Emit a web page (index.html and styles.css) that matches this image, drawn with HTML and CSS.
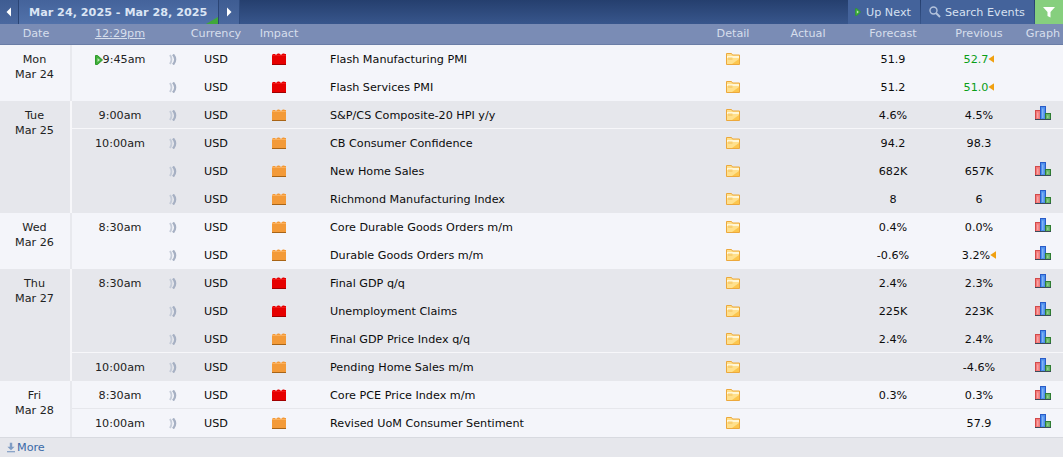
FILE: index.html
```html
<!DOCTYPE html>
<html lang="en">
<head>
<meta charset="utf-8">
<title>Calendar</title>
<link rel="stylesheet" href="styles.css">
</head>
<body>
<svg class="defs" width="0" height="0" aria-hidden="true">
  <symbol id="prev" viewBox="0 0 6 10"><path d="M5 0.5V9.5L0.5 5Z" fill="#fff"/></symbol>
  <symbol id="next" viewBox="0 0 6 10"><path d="M1 0.5V9.5L5.5 5Z" fill="#fff"/></symbol>
  <symbol id="play" viewBox="0 0 8 10"><path d="M0.5 0.5H2.5L7.5 5L2.5 9.5H0.5Z" fill="#3fae3a" stroke="#2e9a2c"/><path d="M2.5 3V7L5 5Z" fill="#bfe8b5"/></symbol>
  <symbol id="sound" viewBox="0 0 8 11">
    <path d="M1 1C2.8 3.5 2.8 7.5 1 10" fill="none" stroke="#c4cbd8" stroke-width="2"/>
    <path d="M4 0.5C6.8 3.5 6.8 7.5 4 10.5" fill="none" stroke="#a6b0c3" stroke-width="2.4"/>
  </symbol>
  <symbol id="high" viewBox="0 0 14 12">
    <path d="M0 1.5H1V1H3V1.5H5V1L6 0.5H7L8 1V1.5H10V1L11 0.5H12L13 1H14V12H0Z" fill="#e60000"/>
    <path d="M0 11H14V12H0Z" fill="#a00000"/>
    <path d="M0 2H14V3H0Z" fill="#f01818"/>
  </symbol>
  <symbol id="medium" viewBox="0 0 14 12">
    <path d="M0 1.5H1V1H3V1.5H5V1L6 0.5H7L8 1V1.5H10V1L11 0.5H12L13 1H14V12H0Z" fill="#f39a38"/>
    <path d="M0 11H14V12H0Z" fill="#a86416"/>
    <path d="M0 2H14V3H0Z" fill="#fbb05c"/>
  </symbol>
  <symbol id="folder" viewBox="0 0 14 12">
    <path d="M0.5 11.5V0.5H5.5L6.5 2H13.5V11.5Z" fill="#ffe08c" stroke="#eca83c"/>
    <path d="M1 3H13V5H1Z" fill="#fff6d6"/>
    <path d="M2 4.5H6.5V7H2Z" fill="#f8cf72"/>
    <path d="M6 11L13 6V11Z" fill="#fcc64e"/>
  </symbol>
  <symbol id="graph" viewBox="0 0 16 14">
    <rect x="0.5" y="4.5" width="5" height="9" fill="#f47a7a" stroke="#d14a4a"/>
    <rect x="5.5" y="0.5" width="5" height="13" fill="#4d90ee" stroke="#2a5cc8"/>
    <rect x="10.5" y="7.5" width="5" height="6" fill="#66b566" stroke="#2f7d32"/>
    <path d="M2 6.5H3.5V12H2ZM7 2.5H8.5V12H7ZM12 9.5H13.5V12H12Z" fill="#ffffff" fill-opacity=".3"/>
    <path d="M0 13.5H16" stroke="#3a4a5a"/>
  </symbol>
  <symbol id="search" viewBox="0 0 12 12"><circle cx="4.5" cy="4.5" r="3.5" fill="none" stroke="#b4c3dc" stroke-width="1.4"/><path d="M7 7L11 11" stroke="#b4c3dc" stroke-width="2"/></symbol>
  <symbol id="filter" viewBox="0 0 12 12"><path d="M0 1H12L7.5 6V11.5L4.5 10V6Z" fill="#fff"/></symbol>
  <symbol id="down" viewBox="0 0 10 12"><path d="M3.5 0H6.5V5H9.5L5 9.5L0.5 5H3.5Z" fill="#7f9cc4"/><path d="M0 10.5H10V12H0Z" fill="#7f9cc4"/></symbol>
</svg>

<nav class="topbar">
  <a class="nav-arrow nav-left"><svg class="arrow-icon"><use href="#prev"/></svg></a>
  <a class="range">Mar 24, 2025 - Mar 28, 2025<span class="corner"></span></a>
  <a class="nav-arrow nav-right"><svg class="arrow-icon"><use href="#next"/></svg></a>
  <span class="spacer"></span>
  <a class="tool tool-next"><svg class="tool-play"><use href="#play"/></svg>Up Next</a>
  <a class="tool tool-search"><svg class="tool-glass"><use href="#search"/></svg>Search Events</a>
  <a class="tool-filter"><svg class="filter-icon"><use href="#filter"/></svg></a>
</nav>

<table class="calendar">
  <colgroup>
    <col class="c-date"><col class="c-time"><col class="c-sound"><col class="c-cur"><col class="c-impact"><col class="c-event"><col class="c-detail"><col class="c-actual"><col class="c-fore"><col class="c-prev"><col class="c-graph">
  </colgroup>
  <thead>
    <tr>
      <th>Date</th><th class="now">12:29pm</th><th></th><th>Currency</th><th>Impact</th><th></th><th>Detail</th><th>Actual</th><th>Forecast</th><th>Previous</th><th>Graph</th>
    </tr>
  </thead>
  <tbody class="day light">
    <tr>
      <td class="date" rowspan="2">Mon<br>Mar 24</td>
      <td class="time"><svg class="play"><use href="#play"/></svg>9:45am</td>
      <td><svg class="sound"><use href="#sound"/></svg></td><td class="cur">USD</td><td><svg class="impact"><use href="#high"/></svg></td>
      <td class="event">Flash Manufacturing PMI</td><td><svg class="folder"><use href="#folder"/></svg></td><td></td><td>51.9</td><td class="better">52.7<i class="rev"></i></td><td></td>
    </tr>
    <tr>
      <td class="time"></td>
      <td><svg class="sound"><use href="#sound"/></svg></td><td class="cur">USD</td><td><svg class="impact"><use href="#high"/></svg></td>
      <td class="event">Flash Services PMI</td><td><svg class="folder"><use href="#folder"/></svg></td><td></td><td>51.2</td><td class="better">51.0<i class="rev"></i></td><td></td>
    </tr>
  </tbody>
  <tbody class="day gray">
    <tr class="rule">
      <td class="date" rowspan="4">Tue<br>Mar 25</td>
      <td class="time">9:00am</td>
      <td><svg class="sound"><use href="#sound"/></svg></td><td class="cur">USD</td><td><svg class="impact"><use href="#medium"/></svg></td>
      <td class="event">S&amp;P/CS Composite-20 HPI y/y</td><td><svg class="folder"><use href="#folder"/></svg></td><td></td><td>4.6%</td><td>4.5%</td><td><svg class="graph"><use href="#graph"/></svg></td>
    </tr>
    <tr>
      <td class="time">10:00am</td>
      <td><svg class="sound"><use href="#sound"/></svg></td><td class="cur">USD</td><td><svg class="impact"><use href="#medium"/></svg></td>
      <td class="event">CB Consumer Confidence</td><td><svg class="folder"><use href="#folder"/></svg></td><td></td><td>94.2</td><td>98.3</td><td></td>
    </tr>
    <tr>
      <td class="time"></td>
      <td><svg class="sound"><use href="#sound"/></svg></td><td class="cur">USD</td><td><svg class="impact"><use href="#medium"/></svg></td>
      <td class="event">New Home Sales</td><td><svg class="folder"><use href="#folder"/></svg></td><td></td><td>682K</td><td>657K</td><td><svg class="graph"><use href="#graph"/></svg></td>
    </tr>
    <tr>
      <td class="time"></td>
      <td><svg class="sound"><use href="#sound"/></svg></td><td class="cur">USD</td><td><svg class="impact"><use href="#medium"/></svg></td>
      <td class="event">Richmond Manufacturing Index</td><td><svg class="folder"><use href="#folder"/></svg></td><td></td><td>8</td><td>6</td><td><svg class="graph"><use href="#graph"/></svg></td>
    </tr>
  </tbody>
  <tbody class="day light">
    <tr>
      <td class="date" rowspan="2">Wed<br>Mar 26</td>
      <td class="time">8:30am</td>
      <td><svg class="sound"><use href="#sound"/></svg></td><td class="cur">USD</td><td><svg class="impact"><use href="#medium"/></svg></td>
      <td class="event">Core Durable Goods Orders m/m</td><td><svg class="folder"><use href="#folder"/></svg></td><td></td><td>0.4%</td><td>0.0%</td><td><svg class="graph"><use href="#graph"/></svg></td>
    </tr>
    <tr>
      <td class="time"></td>
      <td><svg class="sound"><use href="#sound"/></svg></td><td class="cur">USD</td><td><svg class="impact"><use href="#medium"/></svg></td>
      <td class="event">Durable Goods Orders m/m</td><td><svg class="folder"><use href="#folder"/></svg></td><td></td><td>-0.6%</td><td>3.2%<i class="rev"></i></td><td><svg class="graph"><use href="#graph"/></svg></td>
    </tr>
  </tbody>
  <tbody class="day gray">
    <tr>
      <td class="date" rowspan="4">Thu<br>Mar 27</td>
      <td class="time">8:30am</td>
      <td><svg class="sound"><use href="#sound"/></svg></td><td class="cur">USD</td><td><svg class="impact"><use href="#high"/></svg></td>
      <td class="event">Final GDP q/q</td><td><svg class="folder"><use href="#folder"/></svg></td><td></td><td>2.4%</td><td>2.3%</td><td><svg class="graph"><use href="#graph"/></svg></td>
    </tr>
    <tr>
      <td class="time"></td>
      <td><svg class="sound"><use href="#sound"/></svg></td><td class="cur">USD</td><td><svg class="impact"><use href="#high"/></svg></td>
      <td class="event">Unemployment Claims</td><td><svg class="folder"><use href="#folder"/></svg></td><td></td><td>225K</td><td>223K</td><td><svg class="graph"><use href="#graph"/></svg></td>
    </tr>
    <tr class="rule">
      <td class="time"></td>
      <td><svg class="sound"><use href="#sound"/></svg></td><td class="cur">USD</td><td><svg class="impact"><use href="#medium"/></svg></td>
      <td class="event">Final GDP Price Index q/q</td><td><svg class="folder"><use href="#folder"/></svg></td><td></td><td>2.4%</td><td>2.4%</td><td><svg class="graph"><use href="#graph"/></svg></td>
    </tr>
    <tr>
      <td class="time">10:00am</td>
      <td><svg class="sound"><use href="#sound"/></svg></td><td class="cur">USD</td><td><svg class="impact"><use href="#medium"/></svg></td>
      <td class="event">Pending Home Sales m/m</td><td><svg class="folder"><use href="#folder"/></svg></td><td></td><td></td><td>-4.6%</td><td><svg class="graph"><use href="#graph"/></svg></td>
    </tr>
  </tbody>
  <tbody class="day light">
    <tr class="rule">
      <td class="date" rowspan="2">Fri<br>Mar 28</td>
      <td class="time">8:30am</td>
      <td><svg class="sound"><use href="#sound"/></svg></td><td class="cur">USD</td><td><svg class="impact"><use href="#high"/></svg></td>
      <td class="event">Core PCE Price Index m/m</td><td><svg class="folder"><use href="#folder"/></svg></td><td></td><td>0.3%</td><td>0.3%</td><td><svg class="graph"><use href="#graph"/></svg></td>
    </tr>
    <tr>
      <td class="time">10:00am</td>
      <td><svg class="sound"><use href="#sound"/></svg></td><td class="cur">USD</td><td><svg class="impact"><use href="#medium"/></svg></td>
      <td class="event">Revised UoM Consumer Sentiment</td><td><svg class="folder"><use href="#folder"/></svg></td><td></td><td></td><td>57.9</td><td><svg class="graph"><use href="#graph"/></svg></td>
    </tr>
  </tbody>
</table>

<footer class="more"><a class="more-link"><svg class="down"><use href="#down"/></svg>More</a></footer>
</body>
</html>
```

FILE: styles.css
```css
* { box-sizing: border-box; }
html, body { margin: 0; padding: 0; }
body {
  font-family: "DejaVu Sans", Verdana, sans-serif;
  font-size: 11.2px;
  color: #0c0c0c;
  background: #e6e7ec;
  overflow: hidden;
}
.defs { position: absolute; }
a { display: flex; align-items: center; white-space: nowrap; }

.topbar {
  display: flex;
  height: 24px;
  background: linear-gradient(#253f6e, #38568c);
}
.nav-arrow {
  justify-content: center;
  background: linear-gradient(#3e5c92, #4a689f);
}
.nav-left { width: 19px; border-right: 1px solid #2b4575; }
.nav-right { width: 22px; border-left: 1px solid #2b4575; border-right: 1px solid #2f4c80; }
.arrow-icon { width: 6px; height: 10px; }
.range {
  position: relative;
  width: 199px;
  padding-left: 10px;
  font-weight: bold;
  color: #dbe5f4;
  background: linear-gradient(#44639b, #5272aa);
}
.corner {
  position: absolute;
  right: 0;
  bottom: 0;
  border-style: solid;
  border-width: 0 0 7px 12px;
  border-color: transparent transparent #3fa83a transparent;
}
.spacer { flex: 1; }
.tool {
  color: #d6e0f0;
  background: #44639b;
  margin-right: 1px;
}
.tool-next { width: 72px; padding-left: 7px; }
.tool-search { width: 113px; padding-left: 8px; }
.tool-play { width: 6px; height: 8px; margin-right: 5px; }
.tool-glass { width: 12px; height: 12px; margin-right: 4px; }
.tool-filter {
  width: 28px;
  justify-content: center;
  background: #86cf7e;
}
.filter-icon { width: 12px; height: 12px; }

.calendar {
  width: 1063px;
  table-layout: fixed;
  border-collapse: separate;
  border-spacing: 0;
}
.c-date { width: 72px; }
.c-time { width: 96px; }
.c-sound { width: 10px; }
.c-cur { width: 76px; }
.c-impact { width: 50px; }
.c-event { width: 397px; }
.c-detail { width: 64px; }
.c-actual { width: 86px; }
.c-fore { width: 84px; }
.c-prev { width: 88px; }
.c-graph { width: 40px; }

th {
  height: 21px;
  padding: 0 0 1px;
  font-weight: normal;
  color: #d6deec;
  background: #7a8cb5;
  border-bottom: 1px solid #6a7da6;
  text-align: center;
}
th.now { text-decoration: underline; }

td {
  height: 28px;
  padding: 2px 0 0;
  text-align: center;
  vertical-align: middle;
  white-space: nowrap;
  line-height: 14px;
}
.light { background: #f4f5fa; }
.gray { background: #e6e7ec; }
.rule > td:not(.date) { box-shadow: inset 0 -1px 0 #f7f7fa; }
.light .rule > td:not(.date) { box-shadow: inset 0 -1px 0 #e6e7ec; }
.date {
  vertical-align: top;
  padding: 7px 1px 0 0;
  line-height: 15px;
  border-right: 2px solid #f7f7fa;
  color: #222;
}
.light .date { border-right-color: #e8e9ee; }
.time { color: #222; }
.event { text-align: left; padding-left: 26px; }
.better { color: #0a9e18; }
.rev {
  display: inline-block;
  width: 6px;
  height: 8px;
  background: #f0a010;
  clip-path: polygon(100% 0, 100% 100%, 0 50%);
}
svg { vertical-align: middle; }
.play { width: 8px; height: 10px; }
.sound { width: 8px; height: 11px; display: block; margin: -2px auto 0; }
.impact { width: 14px; height: 12px; display: block; margin: -2px auto 0; }
.folder { width: 14px; height: 12px; display: block; margin: -2px auto 0; }
.graph { width: 16px; height: 14px; display: block; margin: -2px auto 4px; }

.more {
  height: 20px;
  display: flex;
  align-items: center;
  padding-left: 7px;
  border-top: 1px solid #d8dae0;
}
.more-link { color: #3a6aa8; }
.down { width: 8px; height: 11px; margin-right: 2px; }
```
